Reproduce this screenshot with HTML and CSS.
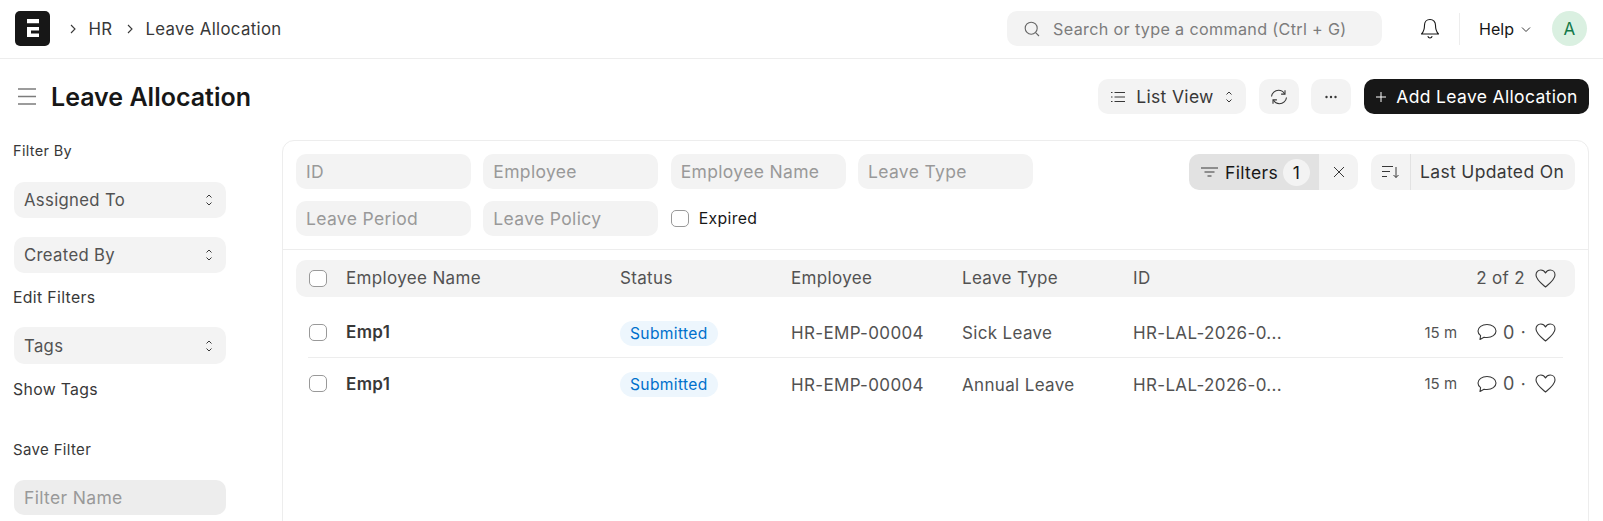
FILE: index.html
```html
<!DOCTYPE html>
<html lang="en">
<head>
<meta charset="utf-8">
<title>Leave Allocation</title>
<link rel="stylesheet" href="styles.css">
</head>
<body>
<header class="navbar">
  <div class="logo"><svg width="35" height="35" viewBox="0 0 35 35"><path d="M12 8h12v4.300H12zM12 16h12v3.400h-8v3.200h8V26H12z" fill="#fff"/></svg></div>
  <nav class="crumbs">
    <svg class="crumb-sep" width="12" height="12" viewBox="0 0 12 12"><path d="M4 2l4 4-4 4" fill="none" stroke="#383838" stroke-width="1.100"/></svg>
    <span>HR</span>
    <svg class="crumb-sep second" width="12" height="12" viewBox="0 0 12 12"><path d="M4 2l4 4-4 4" fill="none" stroke="#383838" stroke-width="1.100"/></svg>
    <span>Leave Allocation</span>
  </nav>
  <div class="nav-right">
    <div class="search">
      <svg width="18" height="18" viewBox="0 0 18 18"><circle cx="8.200" cy="8.200" r="6" fill="none" stroke="#666" stroke-width="1.100"/><path d="M12.600 12.600l3.400 3.400" stroke="#666" stroke-width="1.100"/></svg>
      <span>Search or type a command (Ctrl + G)</span>
    </div>
    <svg class="bell" width="20" height="22" viewBox="0 0 20 22"><path d="M10 1.500c-3.400 0-5.500 2.500-5.500 5.700 0 4.300-.8 6.500-3 8.800h17c-2.200-2.300-3-4.500-3-8.800 0-3.200-2.100-5.700-5.500-5.700zM7.800 18.300c.4 1.100 1.200 1.700 2.200 1.700s1.800-.6 2.200-1.700" fill="none" stroke="#171717" stroke-width="1.100" stroke-linejoin="round"/></svg>
    <div class="nav-divider"></div>
    <div class="help">Help <svg width="12" height="12" viewBox="0 0 12 12"><path d="M2 4.500l4 4 4-4" fill="none" stroke="#383838" stroke-width="1"/></svg></div>
    <div class="avatar">A</div>
  </div>
</header>

<div class="page-head">
  <svg class="hamburger" width="18" height="17" viewBox="0 0 18 17"><path d="M0 1h18M0 8.500h18M0 16h18" stroke="#7c7c7c" stroke-width="1.300"/></svg>
  <h1>Leave Allocation</h1>
  <div class="actions">
    <button class="btn list-view">
      <svg width="16" height="16" viewBox="0 0 16 16"><path d="M4.500 3.500H15M4.500 8H15M4.500 12.500H15" stroke="#383838" stroke-width="1"/><path d="M1 3.500h1.500M1 8h1.500M1 12.500h1.500" stroke="#383838" stroke-width="1"/></svg>
      <span>List View</span>
      <svg width="10" height="16" viewBox="0 0 10 16"><path d="M2.500 5.500L5 3l2.500 2.500M2.500 10.500L5 13l2.500-2.500" fill="none" stroke="#383838" stroke-width="1"/></svg>
    </button>
    <button class="btn icon-btn"><svg width="18" height="18" viewBox="0 0 18 18"><path d="M1.500 8.500C1.900 5 4.900 2.300 8.500 2.300c2.700 0 4.900 1.400 6.100 3.600M16.500 9.500c-.4 3.500-3.400 6.200-7 6.200-2.700 0-4.900-1.400-6.100-3.600" fill="none" stroke="#383838" stroke-width="1.100"/><path d="M15 2.200v3.900h-3.900M3 15.800v-3.900h3.900" fill="none" stroke="#383838" stroke-width="1.100"/></svg></button>
    <button class="btn icon-btn dots"><svg width="14" height="4" viewBox="0 0 14 4"><circle cx="2.500" cy="2" r="1.200" fill="#383838"/><circle cx="7" cy="2" r="1.200" fill="#383838"/><circle cx="11.500" cy="2" r="1.200" fill="#383838"/></svg></button>
    <button class="btn primary"><svg width="12" height="12" viewBox="0 0 12 12"><path d="M6 1v10M1 6h10" stroke="#fff" stroke-width="1"/></svg><span>Add Leave Allocation</span></button>
  </div>
</div>

<div class="layout">
  <aside class="sidebar">
    <div class="side-label first">Filter By</div>
    <div class="side-select">Assigned To <svg width="10" height="16" viewBox="0 0 10 16"><path d="M2.500 5.500L5 3l2.500 2.500M2.500 10.500L5 13l2.500-2.500" fill="none" stroke="#383838" stroke-width="1"/></svg></div>
    <div class="side-select">Created By <svg width="10" height="16" viewBox="0 0 10 16"><path d="M2.500 5.500L5 3l2.500 2.500M2.500 10.500L5 13l2.500-2.500" fill="none" stroke="#383838" stroke-width="1"/></svg></div>
    <div class="side-link edit">Edit Filters</div>
    <div class="side-select tags">Tags <svg width="10" height="16" viewBox="0 0 10 16"><path d="M2.500 5.500L5 3l2.500 2.500M2.500 10.500L5 13l2.500-2.500" fill="none" stroke="#383838" stroke-width="1"/></svg></div>
    <div class="side-link show">Show Tags</div>
    <div class="side-label save">Save Filter</div>
    <div class="side-input">Filter Name</div>
  </aside>

  <main class="card">
    <section class="filters">
      <div class="filter-grid">
        <div class="field">ID</div>
        <div class="field">Employee</div>
        <div class="field">Employee Name</div>
        <div class="field">Leave Type</div>
        <div class="field">Leave Period</div>
        <div class="field">Leave Policy</div>
        <label class="expired"><span class="check"></span>Expired</label>
      </div>
      <div class="filter-tools">
        <div class="filter-group">
          <div class="filter-btn">
            <svg width="17" height="10" viewBox="0 0 17 10"><path d="M0 1h17M3.500 5h10M6.500 9h4" stroke="#383838" stroke-width="1.100"/></svg>
            <span>Filters</span><span class="count">1</span>
          </div>
          <div class="filter-clear"><svg width="12" height="12" viewBox="0 0 12 12"><path d="M1 1l10 10M11 1L1 11" stroke="#383838" stroke-width="1"/></svg></div>
        </div>
        <div class="sort-group">
          <div class="sort-icon"><svg width="18" height="14" viewBox="0 0 18 14"><path d="M0 1.500h11M0 6.500h8M0 11.500h5" stroke="#383838" stroke-width="1"/><path d="M14 2v10.500M11.500 10l2.500 2.500 2.500-2.500" fill="none" stroke="#383838" stroke-width="1"/></svg></div>
          <div class="sort-label">Last Updated On</div>
        </div>
      </div>
    </section>

    <section class="list">
      <div class="list-head row-grid">
        <span class="check"></span>
        <span class="col-name">Employee Name</span>
        <span class="col-status">Status</span>
        <span class="col-emp">Employee</span>
        <span class="col-type">Leave Type</span>
        <span class="col-id">ID</span>
        <span class="head-end"><span>2 of 2</span>
          <svg class="heart" width="21" height="19" viewBox="0 0 21 19"><path d="M10.500 18C6.500 14.600 1 10.500 1 6 1 3.200 3.100 1 5.800 1c2 0 3.700 1.100 4.700 3 1-1.900 2.700-3 4.700-3C17.900 1 20 3.200 20 6c0 4.500-5.500 8.600-9.500 12z" fill="none" stroke="#383838" stroke-width="1.100" stroke-linejoin="round"/></svg>
        </span>
      </div>
      <div class="row row-grid">
        <span class="check"></span>
        <span class="col-name strong">Emp1</span>
        <span class="col-status"><span class="pill">Submitted</span></span>
        <span class="col-emp">HR-EMP-00004</span>
        <span class="col-type">Sick Leave</span>
        <span class="col-id">HR-LAL-2026-0...</span>
        <span class="row-end"><span class="age">15 m</span>
          <svg width="20" height="18" viewBox="0 0 20 18"><path d="M10 1.500C5 1.500 1 4.200 1 8c0 1.900 1 3.500 2.600 4.600L3 16.500l4-2.300c.9.200 2 .3 3 .3 5 0 9-2.800 9-6.500S15 1.500 10 1.500z" fill="none" stroke="#383838" stroke-width="1.100" stroke-linejoin="round"/></svg>
          <span class="num">0</span><span class="dot">·</span>
          <svg class="heart" width="21" height="19" viewBox="0 0 21 19"><path d="M10.500 18C6.500 14.600 1 10.500 1 6 1 3.200 3.100 1 5.800 1c2 0 3.700 1.100 4.700 3 1-1.900 2.700-3 4.700-3C17.900 1 20 3.200 20 6c0 4.500-5.500 8.600-9.500 12z" fill="none" stroke="#383838" stroke-width="1.100" stroke-linejoin="round"/></svg>
        </span>
      </div>
      <div class="row row-grid last">
        <span class="check"></span>
        <span class="col-name strong">Emp1</span>
        <span class="col-status"><span class="pill">Submitted</span></span>
        <span class="col-emp">HR-EMP-00004</span>
        <span class="col-type">Annual Leave</span>
        <span class="col-id">HR-LAL-2026-0...</span>
        <span class="row-end"><span class="age">15 m</span>
          <svg width="20" height="18" viewBox="0 0 20 18"><path d="M10 1.500C5 1.500 1 4.200 1 8c0 1.900 1 3.500 2.600 4.600L3 16.500l4-2.300c.9.200 2 .3 3 .3 5 0 9-2.800 9-6.500S15 1.500 10 1.500z" fill="none" stroke="#383838" stroke-width="1.100" stroke-linejoin="round"/></svg>
          <span class="num">0</span><span class="dot">·</span>
          <svg class="heart" width="21" height="19" viewBox="0 0 21 19"><path d="M10.500 18C6.500 14.600 1 10.500 1 6 1 3.200 3.100 1 5.800 1c2 0 3.700 1.100 4.700 3 1-1.900 2.700-3 4.700-3C17.900 1 20 3.200 20 6c0 4.500-5.500 8.600-9.500 12z" fill="none" stroke="#383838" stroke-width="1.100" stroke-linejoin="round"/></svg>
        </span>
      </div>
    </section>
  </main>
</div>
</body>
</html>
```
FILE: styles.css
```css
* { box-sizing: border-box; }
html, body { margin: 0; height: 100%; }
body {
  background: #fff;
  color: #383838;
  font-family: Inter, "Liberation Sans", sans-serif;
  font-size: 17px;
  overflow: hidden;
  letter-spacing: 0.02em;
}
svg { display: block; flex: none; }

.navbar {
  height: 59px;
  border-bottom: 1px solid #ededed;
  display: flex;
  align-items: center;
  padding: 0 16px 1px 15px;
}
.logo {
  width: 35px; height: 35px;
  background: #171717;
  border-radius: 5px;
  margin-right: 17px;
}
.crumbs { display: flex; align-items: center; gap: 9.500px; font-size: 16.800px; color: #383838; }
.crumb-sep.second { margin-left: 2px; }
.nav-right { margin-left: auto; display: flex; align-items: center; }
.search {
  width: 375px; height: 35px;
  background: #f3f3f3;
  border-radius: 10px;
  display: flex; align-items: center; gap: 12px;
  padding-left: 16px;
  color: #7c7c7c;
  font-size: 16.150px;
}
.bell { margin-left: 38px; }
.nav-divider { width: 1px; height: 32px; background: #ededed; margin: 0 19px; }
.help { display: flex; align-items: center; gap: 6px; color: #171717; font-size: 16px; letter-spacing: 0; }
.avatar {
  width: 35px; height: 35px;
  border-radius: 50%;
  background: #daf0e1;
  color: #137949;
  display: flex; align-items: center; justify-content: center;
  margin-left: 20px;
  font-size: 17px;
}

.page-head {
  height: 81px;
  display: flex; align-items: center;
  padding: 0 14px 6px 18px;
}
.page-head h1 {
  margin: 0 0 0 15px;
  font-size: 25px;
  font-weight: 600;
  color: #171717;
  letter-spacing: 0;
}
.actions { margin-left: auto; display: flex; gap: 13px; font-size: 17.500px; }
.btn {
  height: 35px;
  border: 0;
  border-radius: 10px;
  background: #f3f3f3;
  color: #383838;
  font: inherit;
  letter-spacing: inherit;
  display: flex; align-items: center; justify-content: center;
  padding: 0;
}
.list-view { width: 148px; gap: 10px; }
.icon-btn { width: 40px; }
.icon-btn.dots { margin-left: -1px; }
.primary { width: 225px; background: #171717; color: #fff; gap: 9px; }

.layout { display: flex; align-items: flex-start; }
.sidebar { width: 282px; padding: 0 56px 0 14px; flex: none; }
.side-label { font-size: 14.500px; line-height: 18px; margin-left: -1px; }
.side-label.first { margin-top: 2px; }
.side-select {
  height: 36px;
  background: #f3f3f3;
  border-radius: 10px;
  display: flex; align-items: center; justify-content: space-between;
  padding: 0 12px 0 10px;
  margin-top: 19px;
  color: #525252;
  font-size: 16.700px;
}
.side-label.first + .side-select { margin-top: 22px; }
.side-select + .side-select { margin-top: 19px; }
.side-link { font-size: 15.800px; line-height: 20px; color: #383838; margin-left: -1px; }
.edit { margin-top: 15px; }
.side-select.tags { margin-top: 19px; height: 37px; }
.show { margin-top: 16px; }
.side-label.save { margin-top: 41px; font-size: 15px; }
.side-input {
  height: 35px;
  background: #ededed;
  border-radius: 10px;
  margin-top: 21px;
  padding: 0 10px;
  display: flex; align-items: center;
  color: #999;
  font-size: 17.500px;
}

.card {
  width: 1307px;
  height: 400px;
  border: 1px solid #ededed;
  border-radius: 12px;
}
.filters {
  display: flex; justify-content: space-between;
  height: 109px;
  padding: 13px 13px 0;
  border-bottom: 1px solid #ededed;
}
.filter-grid {
  display: grid;
  grid-template-columns: repeat(4, 175px);
  grid-auto-rows: 35px;
  gap: 12px 12.330px;
}
.field {
  background: #f3f3f3;
  border-radius: 10px;
  display: flex; align-items: center;
  padding: 0 10px;
  color: #999;
  font-size: 17.500px;
}
.expired { display: flex; align-items: center; gap: 10px; font-size: 15.800px; color: #171717; }
.check {
  display: block;
  width: 18px; height: 17px;
  border: 1px solid #999;
  border-radius: 5px;
  background: #fff;
}
.filter-tools { display: flex; gap: 13px; align-items: flex-start; font-size: 17.500px; }
.filter-group { display: flex; height: 36px; border-radius: 10px; overflow: hidden; }
.filter-btn {
  width: 130px;
  background: #e2e2e2;
  display: flex; align-items: center;
  padding-left: 12px;
  gap: 7px;
  color: #171717;
}
.count {
  width: 27px; height: 27px;
  border-radius: 50%;
  background: #f3f3f3;
  display: flex; align-items: center; justify-content: center;
  margin-left: -2px;
}
.filter-clear { width: 39px; background: #f3f3f3; display: flex; align-items: center; justify-content: center; }
.sort-group { display: flex; height: 36px; background: #f3f3f3; border-radius: 10px; }
.sort-icon { width: 40px; border-right: 1px solid #e2e2e2; display: flex; align-items: center; justify-content: center; }
.sort-label { width: 164px; display: flex; align-items: center; padding: 0 0 2px 9px; }

.list { padding: 10px 13px 0; }
.row-grid {
  display: grid;
  grid-template-columns: 37px 274px 171px 171px 171px 1fr auto;
  align-items: center;
}
.list-head {
  height: 37px;
  background: #f3f3f3;
  border-radius: 10px;
  padding: 0 19px 0 13px;
  color: #525252;
}
.list-head > span:not(.check) { margin-bottom: 1px; }
.head-end { display: flex; align-items: center; gap: 10px; }
.row {
  height: 51px;
  margin: 0 12px;
  border-bottom: 1px solid #ededed;
  padding: 0 7px 0 1px;
  color: #525252;
}
.list-head + .row { margin-top: 10px; }
.row.last { border-bottom: 0; }
.row .col-status, .row .col-emp, .row .col-type, .row .col-id { margin-top: 2px; }
.strong { font-weight: 600; color: #383838; }
.pill {
  display: inline-flex; align-items: center;
  height: 25px;
  padding: 0 10px;
  background: #edf6fd;
  color: #0070cc;
  border-radius: 13px;
  font-size: 15.600px;
}
.row-end { display: flex; align-items: center; }
.age { font-size: 15px; margin-right: 20px; letter-spacing: 0; }
.num { margin: 0 6px 0 6px; font-size: 18px; }
.dot { margin-right: 9px; }
```
